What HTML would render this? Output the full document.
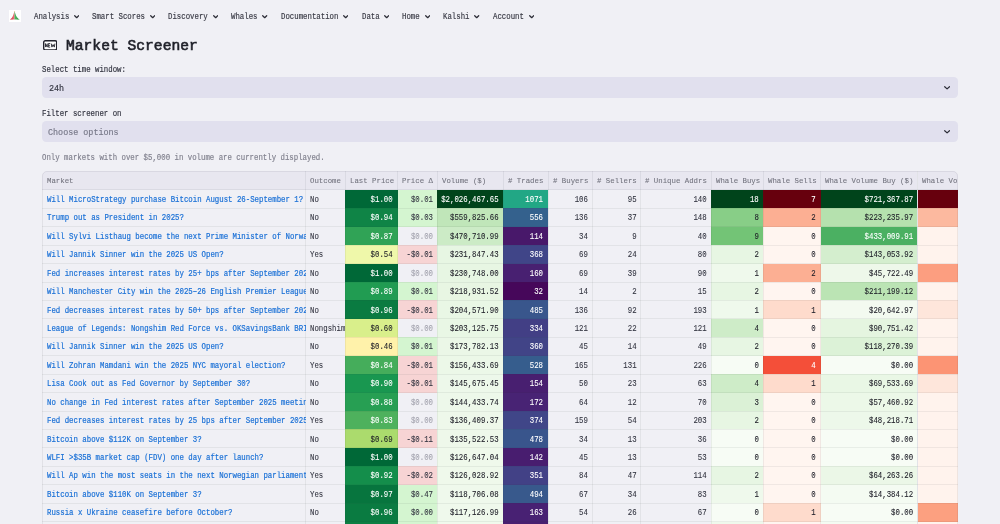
<!DOCTYPE html>
<html><head><meta charset="utf-8"><style>
html,body{margin:0;padding:0;width:1000px;height:524px;overflow:hidden;background:#f0f0f5;}
body{position:relative;font-family:"Liberation Mono",monospace;}
.t{will-change:transform;position:absolute;white-space:pre;line-height:1.1328;-webkit-text-stroke:0.15px currentColor;}
.a{position:absolute;}
.sel{background:#e1e0ee;border-radius:4.2px;}
.tbl{overflow:hidden;border-radius:5px;}
.tclip{overflow:hidden;}
.tbo{position:absolute;border:1px solid rgba(49,51,63,0.08);border-radius:5px;box-sizing:border-box;}
.tbl>div{position:absolute;}
.tbl>.gv{top:0;width:1px;height:400px;background:rgba(49,51,63,0.07);}
.tbl>.gh{left:0;height:1px;width:916px;background:rgba(49,51,63,0.07);}
.h{background:#e8e7f0;}
.ct{will-change:transform;position:absolute;white-space:pre;overflow:hidden;font-size:7.37px;line-height:1.1328;-webkit-text-stroke:0.08px currentColor;}
.lk{-webkit-text-stroke:0.18px currentColor;}
</style></head><body>
<div class="t" style="left:33.60px;top:13px;font-size:7.37px;color:#383944;font-weight:400;transform:scaleY(1.12);transform-origin:0 6px;">Analysis</div>
<svg class="a" style="left:73.58px;top:15.4px" width="5.4" height="3.6" viewBox="0 0 5.4 3.6"><path d="M0.7 0.7 L2.7 2.7 L4.7 0.7" fill="none" stroke="#2b2c36" stroke-width="1.25" stroke-linecap="round" stroke-linejoin="round"/></svg>
<div class="t" style="left:92.13px;top:13px;font-size:7.37px;color:#383944;font-weight:400;transform:scaleY(1.12);transform-origin:0 6px;">Smart Scores</div>
<svg class="a" style="left:149.79px;top:15.4px" width="5.4" height="3.6" viewBox="0 0 5.4 3.6"><path d="M0.7 0.7 L2.7 2.7 L4.7 0.7" fill="none" stroke="#2b2c36" stroke-width="1.25" stroke-linecap="round" stroke-linejoin="round"/></svg>
<div class="t" style="left:168.34px;top:13px;font-size:7.37px;color:#383944;font-weight:400;transform:scaleY(1.12);transform-origin:0 6px;">Discovery</div>
<svg class="a" style="left:212.74px;top:15.4px" width="5.4" height="3.6" viewBox="0 0 5.4 3.6"><path d="M0.7 0.7 L2.7 2.7 L4.7 0.7" fill="none" stroke="#2b2c36" stroke-width="1.25" stroke-linecap="round" stroke-linejoin="round"/></svg>
<div class="t" style="left:231.29px;top:13px;font-size:7.37px;color:#383944;font-weight:400;transform:scaleY(1.12);transform-origin:0 6px;">Whales</div>
<svg class="a" style="left:262.42px;top:15.4px" width="5.4" height="3.6" viewBox="0 0 5.4 3.6"><path d="M0.7 0.7 L2.7 2.7 L4.7 0.7" fill="none" stroke="#2b2c36" stroke-width="1.25" stroke-linecap="round" stroke-linejoin="round"/></svg>
<div class="t" style="left:280.97px;top:13px;font-size:7.37px;color:#383944;font-weight:400;transform:scaleY(1.12);transform-origin:0 6px;">Documentation</div>
<svg class="a" style="left:343.06px;top:15.4px" width="5.4" height="3.6" viewBox="0 0 5.4 3.6"><path d="M0.7 0.7 L2.7 2.7 L4.7 0.7" fill="none" stroke="#2b2c36" stroke-width="1.25" stroke-linecap="round" stroke-linejoin="round"/></svg>
<div class="t" style="left:361.61px;top:13px;font-size:7.37px;color:#383944;font-weight:400;transform:scaleY(1.12);transform-origin:0 6px;">Data</div>
<svg class="a" style="left:383.89px;top:15.4px" width="5.4" height="3.6" viewBox="0 0 5.4 3.6"><path d="M0.7 0.7 L2.7 2.7 L4.7 0.7" fill="none" stroke="#2b2c36" stroke-width="1.25" stroke-linecap="round" stroke-linejoin="round"/></svg>
<div class="t" style="left:402.44px;top:13px;font-size:7.37px;color:#383944;font-weight:400;transform:scaleY(1.12);transform-origin:0 6px;">Home</div>
<svg class="a" style="left:424.73px;top:15.4px" width="5.4" height="3.6" viewBox="0 0 5.4 3.6"><path d="M0.7 0.7 L2.7 2.7 L4.7 0.7" fill="none" stroke="#2b2c36" stroke-width="1.25" stroke-linecap="round" stroke-linejoin="round"/></svg>
<div class="t" style="left:443.28px;top:13px;font-size:7.37px;color:#383944;font-weight:400;transform:scaleY(1.12);transform-origin:0 6px;">Kalshi</div>
<svg class="a" style="left:474.41px;top:15.4px" width="5.4" height="3.6" viewBox="0 0 5.4 3.6"><path d="M0.7 0.7 L2.7 2.7 L4.7 0.7" fill="none" stroke="#2b2c36" stroke-width="1.25" stroke-linecap="round" stroke-linejoin="round"/></svg>
<div class="t" style="left:492.96px;top:13px;font-size:7.37px;color:#383944;font-weight:400;transform:scaleY(1.12);transform-origin:0 6px;">Account</div>
<svg class="a" style="left:528.52px;top:15.4px" width="5.4" height="3.6" viewBox="0 0 5.4 3.6"><path d="M0.7 0.7 L2.7 2.7 L4.7 0.7" fill="none" stroke="#2b2c36" stroke-width="1.25" stroke-linecap="round" stroke-linejoin="round"/></svg>
<svg class="a" style="left:9px;top:10px" width="12" height="12" viewBox="0 0 12 12"><rect width="12" height="12" fill="#ffffff"/><path d="M0.9 9.4 C3.0 9.2 4.2 5.8 5.5 1.1 L5.5 9.4 Z" fill="#ef6270"/><path d="M5.5 1.1 C6.9 5.8 8.4 9.2 10.8 9.4 L5.5 9.4 Z" fill="#49b45c"/><path d="M0.9 9.4 C2.2 9.2 3.0 8.2 3.7 6.8 L3.7 9.4 Z" fill="#b8444f" opacity="0.55"/><path d="M10.8 9.4 C9.5 9.2 8.6 8.2 7.8 6.9 L7.8 9.4 Z" fill="#2b7f3e" opacity="0.45"/><path d="M4.9 0.9 L6.1 0.9 L5.5 2.0 Z" fill="#f0c040" opacity="0.5"/></svg>
<svg class="a" style="left:42.6px;top:39.6px" width="14.4" height="10.6" viewBox="0 0 14.4 10.6"><rect x="0.7" y="0.7" width="13" height="9.2" rx="1.5" fill="#ffffff" stroke="#23232d" stroke-width="1.4"/><path d="M2.5 7.1 V3.6 L4.2 7.1 V3.6 M7.2 3.6 H5.3 V7.1 H7.2 M5.3 5.35 H6.9 M8.3 3.6 L8.9 7.1 L10.1 4.6 L11.3 7.1 L11.9 3.6" fill="none" stroke="#2a2a34" stroke-width="0.95" stroke-linejoin="round"/></svg>
<div class="t" style="left:66.00px;top:38px;font-size:14.65px;color:#1f2029;font-weight:400;-webkit-text-stroke:0.6px #1f2029;">Market Screener</div>
<div class="t" style="left:42.40px;top:66px;font-size:7.37px;color:#31333f;font-weight:400;transform:scaleY(1.12);transform-origin:0 6px;">Select time window:</div>
<div class="a sel" style="left:42.3px;top:77px;width:915.7px;height:20.9px"></div>
<div class="t" style="left:48.80px;top:85px;font-size:8.42px;color:#31333f;font-weight:400;transform:scaleY(1.05);transform-origin:0 6px;">24h</div>
<svg class="a" style="left:944.3px;top:85.6px" width="6.2" height="4" viewBox="0 0 6.2 4"><path d="M0.7 0.7 L3.1 2.9 L5.5 0.7" fill="none" stroke="#2b2c36" stroke-width="1.2" stroke-linecap="round" stroke-linejoin="round"/></svg>
<div class="t" style="left:42.40px;top:110px;font-size:7.37px;color:#31333f;font-weight:400;transform:scaleY(1.12);transform-origin:0 6px;">Filter screener on</div>
<div class="a sel" style="left:42.3px;top:121.3px;width:915.7px;height:20.9px"></div>
<div class="t" style="left:47.80px;top:129px;font-size:8.42px;color:#777888;font-weight:400;transform:scaleY(1.05);transform-origin:0 6px;">Choose options</div>
<svg class="a" style="left:944.3px;top:130.3px" width="6.2" height="4" viewBox="0 0 6.2 4"><path d="M0.7 0.7 L3.1 2.9 L5.5 0.7" fill="none" stroke="#2b2c36" stroke-width="1.2" stroke-linecap="round" stroke-linejoin="round"/></svg>
<div class="t" style="left:42.40px;top:154px;font-size:7.37px;color:#80818e;font-weight:400;transform:scaleY(1.12);transform-origin:0 6px;">Only markets with over $5,000 in volume are currently displayed.</div>
<div class="a tbl" style="left:42px;top:171px;width:916px;height:360px">
<div class="h" style="left:0.30px;top:0.10px;width:263.40px;height:18.80px;"></div>
<div class="h" style="left:263.70px;top:0.10px;width:39.60px;height:18.80px;"></div>
<div class="h" style="left:303.30px;top:0.10px;width:52.30px;height:18.80px;"></div>
<div class="h" style="left:355.60px;top:0.10px;width:39.60px;height:18.80px;"></div>
<div class="h" style="left:395.20px;top:0.10px;width:66.20px;height:18.80px;"></div>
<div class="h" style="left:461.40px;top:0.10px;width:44.60px;height:18.80px;"></div>
<div class="h" style="left:506.00px;top:0.10px;width:44.50px;height:18.80px;"></div>
<div class="h" style="left:550.50px;top:0.10px;width:48.20px;height:18.80px;"></div>
<div class="h" style="left:598.70px;top:0.10px;width:70.30px;height:18.80px;"></div>
<div class="h" style="left:669.00px;top:0.10px;width:52.40px;height:18.80px;"></div>
<div class="h" style="left:721.40px;top:0.10px;width:57.30px;height:18.80px;"></div>
<div class="h" style="left:778.70px;top:0.10px;width:96.80px;height:18.80px;"></div>
<div class="h" style="left:875.50px;top:0.10px;width:82.50px;height:18.80px;"></div>
<div class="c" style="left:0.30px;top:18.90px;width:263.40px;height:18.43px;"></div>
<div class="c" style="left:263.70px;top:18.90px;width:39.60px;height:18.43px;"></div>
<div class="c" style="left:303.30px;top:18.90px;width:52.30px;height:18.43px;background:#006837;"></div>
<div class="c" style="left:355.60px;top:18.90px;width:39.60px;height:18.43px;background:#d4f5d0;"></div>
<div class="c" style="left:395.20px;top:18.90px;width:66.20px;height:18.43px;background:#00441b;"></div>
<div class="c" style="left:461.40px;top:18.90px;width:44.60px;height:18.43px;background:#22a785;"></div>
<div class="c" style="left:506.00px;top:18.90px;width:44.50px;height:18.43px;"></div>
<div class="c" style="left:550.50px;top:18.90px;width:48.20px;height:18.43px;"></div>
<div class="c" style="left:598.70px;top:18.90px;width:70.30px;height:18.43px;"></div>
<div class="c" style="left:669.00px;top:18.90px;width:52.40px;height:18.43px;background:#00441b;"></div>
<div class="c" style="left:721.40px;top:18.90px;width:57.30px;height:18.43px;background:#67000d;"></div>
<div class="c" style="left:778.70px;top:18.90px;width:96.80px;height:18.43px;background:#00441b;"></div>
<div class="c" style="left:875.50px;top:18.90px;width:82.50px;height:18.43px;background:#67000d;"></div>
<div class="c" style="left:0.30px;top:37.33px;width:263.40px;height:18.43px;"></div>
<div class="c" style="left:263.70px;top:37.33px;width:39.60px;height:18.43px;"></div>
<div class="c" style="left:303.30px;top:37.33px;width:52.30px;height:18.43px;background:#0f8446;"></div>
<div class="c" style="left:355.60px;top:37.33px;width:39.60px;height:18.43px;background:#d4f5d0;"></div>
<div class="c" style="left:395.20px;top:37.33px;width:66.20px;height:18.43px;background:#c0e6b9;"></div>
<div class="c" style="left:461.40px;top:37.33px;width:44.60px;height:18.43px;background:#34618d;"></div>
<div class="c" style="left:506.00px;top:37.33px;width:44.50px;height:18.43px;"></div>
<div class="c" style="left:550.50px;top:37.33px;width:48.20px;height:18.43px;"></div>
<div class="c" style="left:598.70px;top:37.33px;width:70.30px;height:18.43px;"></div>
<div class="c" style="left:669.00px;top:37.33px;width:52.40px;height:18.43px;background:#88ce87;"></div>
<div class="c" style="left:721.40px;top:37.33px;width:57.30px;height:18.43px;background:#fcaf93;"></div>
<div class="c" style="left:778.70px;top:37.33px;width:96.80px;height:18.43px;background:#b5e1ae;"></div>
<div class="c" style="left:875.50px;top:37.33px;width:82.50px;height:18.43px;background:#fcb99f;"></div>
<div class="c" style="left:0.30px;top:55.76px;width:263.40px;height:18.43px;"></div>
<div class="c" style="left:263.70px;top:55.76px;width:39.60px;height:18.43px;"></div>
<div class="c" style="left:303.30px;top:55.76px;width:52.30px;height:18.43px;background:#30a356;"></div>
<div class="c" style="left:355.60px;top:55.76px;width:39.60px;height:18.43px;"></div>
<div class="c" style="left:395.20px;top:55.76px;width:66.20px;height:18.43px;background:#ccebc6;"></div>
<div class="c" style="left:461.40px;top:55.76px;width:44.60px;height:18.43px;background:#48186a;"></div>
<div class="c" style="left:506.00px;top:55.76px;width:44.50px;height:18.43px;"></div>
<div class="c" style="left:550.50px;top:55.76px;width:48.20px;height:18.43px;"></div>
<div class="c" style="left:598.70px;top:55.76px;width:70.30px;height:18.43px;"></div>
<div class="c" style="left:669.00px;top:55.76px;width:52.40px;height:18.43px;background:#73c476;"></div>
<div class="c" style="left:721.40px;top:55.76px;width:57.30px;height:18.43px;background:#fff5f0;"></div>
<div class="c" style="left:778.70px;top:55.76px;width:96.80px;height:18.43px;background:#4bb062;"></div>
<div class="c" style="left:875.50px;top:55.76px;width:82.50px;height:18.43px;background:#fff3ed;"></div>
<div class="c" style="left:0.30px;top:74.19px;width:263.40px;height:18.43px;"></div>
<div class="c" style="left:263.70px;top:74.19px;width:39.60px;height:18.43px;"></div>
<div class="c" style="left:303.30px;top:74.19px;width:52.30px;height:18.43px;background:#eff8aa;"></div>
<div class="c" style="left:355.60px;top:74.19px;width:39.60px;height:18.43px;background:#f7d4d4;"></div>
<div class="c" style="left:395.20px;top:74.19px;width:66.20px;height:18.43px;background:#e7f6e3;"></div>
<div class="c" style="left:461.40px;top:74.19px;width:44.60px;height:18.43px;background:#404588;"></div>
<div class="c" style="left:506.00px;top:74.19px;width:44.50px;height:18.43px;"></div>
<div class="c" style="left:550.50px;top:74.19px;width:48.20px;height:18.43px;"></div>
<div class="c" style="left:598.70px;top:74.19px;width:70.30px;height:18.43px;"></div>
<div class="c" style="left:669.00px;top:74.19px;width:52.40px;height:18.43px;background:#e7f6e3;"></div>
<div class="c" style="left:721.40px;top:74.19px;width:57.30px;height:18.43px;background:#fff5f0;"></div>
<div class="c" style="left:778.70px;top:74.19px;width:96.80px;height:18.43px;background:#d4eece;"></div>
<div class="c" style="left:875.50px;top:74.19px;width:82.50px;height:18.43px;background:#fff3ed;"></div>
<div class="c" style="left:0.30px;top:92.62px;width:263.40px;height:18.43px;"></div>
<div class="c" style="left:263.70px;top:92.62px;width:39.60px;height:18.43px;"></div>
<div class="c" style="left:303.30px;top:92.62px;width:52.30px;height:18.43px;background:#006837;"></div>
<div class="c" style="left:355.60px;top:92.62px;width:39.60px;height:18.43px;"></div>
<div class="c" style="left:395.20px;top:92.62px;width:66.20px;height:18.43px;background:#e7f6e3;"></div>
<div class="c" style="left:461.40px;top:92.62px;width:44.60px;height:18.43px;background:#482071;"></div>
<div class="c" style="left:506.00px;top:92.62px;width:44.50px;height:18.43px;"></div>
<div class="c" style="left:550.50px;top:92.62px;width:48.20px;height:18.43px;"></div>
<div class="c" style="left:598.70px;top:92.62px;width:70.30px;height:18.43px;"></div>
<div class="c" style="left:669.00px;top:92.62px;width:52.40px;height:18.43px;background:#eff9ec;"></div>
<div class="c" style="left:721.40px;top:92.62px;width:57.30px;height:18.43px;background:#fcaf93;"></div>
<div class="c" style="left:778.70px;top:92.62px;width:96.80px;height:18.43px;background:#eef8ea;"></div>
<div class="c" style="left:875.50px;top:92.62px;width:82.50px;height:18.43px;background:#fc9e80;"></div>
<div class="c" style="left:0.30px;top:111.05px;width:263.40px;height:18.43px;"></div>
<div class="c" style="left:263.70px;top:111.05px;width:39.60px;height:18.43px;"></div>
<div class="c" style="left:303.30px;top:111.05px;width:52.30px;height:18.43px;background:#219c52;"></div>
<div class="c" style="left:355.60px;top:111.05px;width:39.60px;height:18.43px;background:#d4f5d0;"></div>
<div class="c" style="left:395.20px;top:111.05px;width:66.20px;height:18.43px;background:#e8f6e3;"></div>
<div class="c" style="left:461.40px;top:111.05px;width:44.60px;height:18.43px;background:#46075a;"></div>
<div class="c" style="left:506.00px;top:111.05px;width:44.50px;height:18.43px;"></div>
<div class="c" style="left:550.50px;top:111.05px;width:48.20px;height:18.43px;"></div>
<div class="c" style="left:598.70px;top:111.05px;width:70.30px;height:18.43px;"></div>
<div class="c" style="left:669.00px;top:111.05px;width:52.40px;height:18.43px;background:#e7f6e3;"></div>
<div class="c" style="left:721.40px;top:111.05px;width:57.30px;height:18.43px;background:#fff5f0;"></div>
<div class="c" style="left:778.70px;top:111.05px;width:96.80px;height:18.43px;background:#bbe4b4;"></div>
<div class="c" style="left:875.50px;top:111.05px;width:82.50px;height:18.43px;background:#fff3ed;"></div>
<div class="c" style="left:0.30px;top:129.48px;width:263.40px;height:18.43px;"></div>
<div class="c" style="left:263.70px;top:129.48px;width:39.60px;height:18.43px;"></div>
<div class="c" style="left:303.30px;top:129.48px;width:52.30px;height:18.43px;background:#0a7b41;"></div>
<div class="c" style="left:355.60px;top:129.48px;width:39.60px;height:18.43px;background:#f7d4d4;"></div>
<div class="c" style="left:395.20px;top:129.48px;width:66.20px;height:18.43px;background:#e9f7e5;"></div>
<div class="c" style="left:461.40px;top:129.48px;width:44.60px;height:18.43px;background:#39568c;"></div>
<div class="c" style="left:506.00px;top:129.48px;width:44.50px;height:18.43px;"></div>
<div class="c" style="left:550.50px;top:129.48px;width:48.20px;height:18.43px;"></div>
<div class="c" style="left:598.70px;top:129.48px;width:70.30px;height:18.43px;"></div>
<div class="c" style="left:669.00px;top:129.48px;width:52.40px;height:18.43px;background:#eff9ec;"></div>
<div class="c" style="left:721.40px;top:129.48px;width:57.30px;height:18.43px;background:#fedbcc;"></div>
<div class="c" style="left:778.70px;top:129.48px;width:96.80px;height:18.43px;background:#f3faf0;"></div>
<div class="c" style="left:875.50px;top:129.48px;width:82.50px;height:18.43px;background:#fee6db;"></div>
<div class="c" style="left:0.30px;top:147.91px;width:263.40px;height:18.43px;"></div>
<div class="c" style="left:263.70px;top:147.91px;width:39.60px;height:18.43px;"></div>
<div class="c" style="left:303.30px;top:147.91px;width:52.30px;height:18.43px;background:#d9ef8b;"></div>
<div class="c" style="left:355.60px;top:147.91px;width:39.60px;height:18.43px;"></div>
<div class="c" style="left:395.20px;top:147.91px;width:66.20px;height:18.43px;background:#e9f7e5;"></div>
<div class="c" style="left:461.40px;top:147.91px;width:44.60px;height:18.43px;background:#423f85;"></div>
<div class="c" style="left:506.00px;top:147.91px;width:44.50px;height:18.43px;"></div>
<div class="c" style="left:550.50px;top:147.91px;width:48.20px;height:18.43px;"></div>
<div class="c" style="left:598.70px;top:147.91px;width:70.30px;height:18.43px;"></div>
<div class="c" style="left:669.00px;top:147.91px;width:52.40px;height:18.43px;background:#ceecc8;"></div>
<div class="c" style="left:721.40px;top:147.91px;width:57.30px;height:18.43px;background:#fff5f0;"></div>
<div class="c" style="left:778.70px;top:147.91px;width:96.80px;height:18.43px;background:#e5f5e0;"></div>
<div class="c" style="left:875.50px;top:147.91px;width:82.50px;height:18.43px;background:#fff3ed;"></div>
<div class="c" style="left:0.30px;top:166.34px;width:263.40px;height:18.43px;"></div>
<div class="c" style="left:263.70px;top:166.34px;width:39.60px;height:18.43px;"></div>
<div class="c" style="left:303.30px;top:166.34px;width:52.30px;height:18.43px;background:#fff2aa;"></div>
<div class="c" style="left:355.60px;top:166.34px;width:39.60px;height:18.43px;background:#d4f5d0;"></div>
<div class="c" style="left:395.20px;top:166.34px;width:66.20px;height:18.43px;background:#ebf7e7;"></div>
<div class="c" style="left:461.40px;top:166.34px;width:44.60px;height:18.43px;background:#414487;"></div>
<div class="c" style="left:506.00px;top:166.34px;width:44.50px;height:18.43px;"></div>
<div class="c" style="left:550.50px;top:166.34px;width:48.20px;height:18.43px;"></div>
<div class="c" style="left:598.70px;top:166.34px;width:70.30px;height:18.43px;"></div>
<div class="c" style="left:669.00px;top:166.34px;width:52.40px;height:18.43px;background:#e7f6e3;"></div>
<div class="c" style="left:721.40px;top:166.34px;width:57.30px;height:18.43px;background:#fff5f0;"></div>
<div class="c" style="left:778.70px;top:166.34px;width:96.80px;height:18.43px;background:#dcf2d7;"></div>
<div class="c" style="left:875.50px;top:166.34px;width:82.50px;height:18.43px;background:#fff3ed;"></div>
<div class="c" style="left:0.30px;top:184.77px;width:263.40px;height:18.43px;"></div>
<div class="c" style="left:263.70px;top:184.77px;width:39.60px;height:18.43px;"></div>
<div class="c" style="left:303.30px;top:184.77px;width:52.30px;height:18.43px;background:#45ad5b;"></div>
<div class="c" style="left:355.60px;top:184.77px;width:39.60px;height:18.43px;background:#f7d4d4;"></div>
<div class="c" style="left:395.20px;top:184.77px;width:66.20px;height:18.43px;background:#ecf8e8;"></div>
<div class="c" style="left:461.40px;top:184.77px;width:44.60px;height:18.43px;background:#365d8d;"></div>
<div class="c" style="left:506.00px;top:184.77px;width:44.50px;height:18.43px;"></div>
<div class="c" style="left:550.50px;top:184.77px;width:48.20px;height:18.43px;"></div>
<div class="c" style="left:598.70px;top:184.77px;width:70.30px;height:18.43px;"></div>
<div class="c" style="left:669.00px;top:184.77px;width:52.40px;height:18.43px;background:#f7fcf5;"></div>
<div class="c" style="left:721.40px;top:184.77px;width:57.30px;height:18.43px;background:#f44f39;"></div>
<div class="c" style="left:778.70px;top:184.77px;width:96.80px;height:18.43px;background:#f7fcf5;"></div>
<div class="c" style="left:875.50px;top:184.77px;width:82.50px;height:18.43px;background:#fc9474;"></div>
<div class="c" style="left:0.30px;top:203.20px;width:263.40px;height:18.43px;"></div>
<div class="c" style="left:263.70px;top:203.20px;width:39.60px;height:18.43px;"></div>
<div class="c" style="left:303.30px;top:203.20px;width:52.30px;height:18.43px;background:#199750;"></div>
<div class="c" style="left:355.60px;top:203.20px;width:39.60px;height:18.43px;background:#f7d4d4;"></div>
<div class="c" style="left:395.20px;top:203.20px;width:66.20px;height:18.43px;background:#edf8ea;"></div>
<div class="c" style="left:461.40px;top:203.20px;width:44.60px;height:18.43px;background:#481f70;"></div>
<div class="c" style="left:506.00px;top:203.20px;width:44.50px;height:18.43px;"></div>
<div class="c" style="left:550.50px;top:203.20px;width:48.20px;height:18.43px;"></div>
<div class="c" style="left:598.70px;top:203.20px;width:70.30px;height:18.43px;"></div>
<div class="c" style="left:669.00px;top:203.20px;width:52.40px;height:18.43px;background:#ceecc8;"></div>
<div class="c" style="left:721.40px;top:203.20px;width:57.30px;height:18.43px;background:#fedbcc;"></div>
<div class="c" style="left:778.70px;top:203.20px;width:96.80px;height:18.43px;background:#e9f7e5;"></div>
<div class="c" style="left:875.50px;top:203.20px;width:82.50px;height:18.43px;background:#fee6db;"></div>
<div class="c" style="left:0.30px;top:221.63px;width:263.40px;height:18.43px;"></div>
<div class="c" style="left:263.70px;top:221.63px;width:39.60px;height:18.43px;"></div>
<div class="c" style="left:303.30px;top:221.63px;width:52.30px;height:18.43px;background:#279f53;"></div>
<div class="c" style="left:355.60px;top:221.63px;width:39.60px;height:18.43px;"></div>
<div class="c" style="left:395.20px;top:221.63px;width:66.20px;height:18.43px;background:#edf8ea;"></div>
<div class="c" style="left:461.40px;top:221.63px;width:44.60px;height:18.43px;background:#482374;"></div>
<div class="c" style="left:506.00px;top:221.63px;width:44.50px;height:18.43px;"></div>
<div class="c" style="left:550.50px;top:221.63px;width:48.20px;height:18.43px;"></div>
<div class="c" style="left:598.70px;top:221.63px;width:70.30px;height:18.43px;"></div>
<div class="c" style="left:669.00px;top:221.63px;width:52.40px;height:18.43px;background:#dbf1d6;"></div>
<div class="c" style="left:721.40px;top:221.63px;width:57.30px;height:18.43px;background:#fff5f0;"></div>
<div class="c" style="left:778.70px;top:221.63px;width:96.80px;height:18.43px;background:#ecf8e8;"></div>
<div class="c" style="left:875.50px;top:221.63px;width:82.50px;height:18.43px;background:#fff3ed;"></div>
<div class="c" style="left:0.30px;top:240.06px;width:263.40px;height:18.43px;"></div>
<div class="c" style="left:263.70px;top:240.06px;width:39.60px;height:18.43px;"></div>
<div class="c" style="left:303.30px;top:240.06px;width:52.30px;height:18.43px;background:#4eb15d;"></div>
<div class="c" style="left:355.60px;top:240.06px;width:39.60px;height:18.43px;"></div>
<div class="c" style="left:395.20px;top:240.06px;width:66.20px;height:18.43px;background:#eef8ea;"></div>
<div class="c" style="left:461.40px;top:240.06px;width:44.60px;height:18.43px;background:#404688;"></div>
<div class="c" style="left:506.00px;top:240.06px;width:44.50px;height:18.43px;"></div>
<div class="c" style="left:550.50px;top:240.06px;width:48.20px;height:18.43px;"></div>
<div class="c" style="left:598.70px;top:240.06px;width:70.30px;height:18.43px;"></div>
<div class="c" style="left:669.00px;top:240.06px;width:52.40px;height:18.43px;background:#e7f6e3;"></div>
<div class="c" style="left:721.40px;top:240.06px;width:57.30px;height:18.43px;background:#fff5f0;"></div>
<div class="c" style="left:778.70px;top:240.06px;width:96.80px;height:18.43px;background:#edf8ea;"></div>
<div class="c" style="left:875.50px;top:240.06px;width:82.50px;height:18.43px;background:#fff3ed;"></div>
<div class="c" style="left:0.30px;top:258.49px;width:263.40px;height:18.43px;"></div>
<div class="c" style="left:263.70px;top:258.49px;width:39.60px;height:18.43px;"></div>
<div class="c" style="left:303.30px;top:258.49px;width:52.30px;height:18.43px;background:#abdb6d;"></div>
<div class="c" style="left:355.60px;top:258.49px;width:39.60px;height:18.43px;background:#f7d4d4;"></div>
<div class="c" style="left:395.20px;top:258.49px;width:66.20px;height:18.43px;background:#eef8ea;"></div>
<div class="c" style="left:461.40px;top:258.49px;width:44.60px;height:18.43px;background:#39558c;"></div>
<div class="c" style="left:506.00px;top:258.49px;width:44.50px;height:18.43px;"></div>
<div class="c" style="left:550.50px;top:258.49px;width:48.20px;height:18.43px;"></div>
<div class="c" style="left:598.70px;top:258.49px;width:70.30px;height:18.43px;"></div>
<div class="c" style="left:669.00px;top:258.49px;width:52.40px;height:18.43px;background:#f7fcf5;"></div>
<div class="c" style="left:721.40px;top:258.49px;width:57.30px;height:18.43px;background:#fff5f0;"></div>
<div class="c" style="left:778.70px;top:258.49px;width:96.80px;height:18.43px;background:#f7fcf5;"></div>
<div class="c" style="left:875.50px;top:258.49px;width:82.50px;height:18.43px;background:#fff3ed;"></div>
<div class="c" style="left:0.30px;top:276.92px;width:263.40px;height:18.43px;"></div>
<div class="c" style="left:263.70px;top:276.92px;width:39.60px;height:18.43px;"></div>
<div class="c" style="left:303.30px;top:276.92px;width:52.30px;height:18.43px;background:#006837;"></div>
<div class="c" style="left:355.60px;top:276.92px;width:39.60px;height:18.43px;"></div>
<div class="c" style="left:395.20px;top:276.92px;width:66.20px;height:18.43px;background:#eff9eb;"></div>
<div class="c" style="left:461.40px;top:276.92px;width:44.60px;height:18.43px;background:#481d6f;"></div>
<div class="c" style="left:506.00px;top:276.92px;width:44.50px;height:18.43px;"></div>
<div class="c" style="left:550.50px;top:276.92px;width:48.20px;height:18.43px;"></div>
<div class="c" style="left:598.70px;top:276.92px;width:70.30px;height:18.43px;"></div>
<div class="c" style="left:669.00px;top:276.92px;width:52.40px;height:18.43px;background:#f7fcf5;"></div>
<div class="c" style="left:721.40px;top:276.92px;width:57.30px;height:18.43px;background:#fff5f0;"></div>
<div class="c" style="left:778.70px;top:276.92px;width:96.80px;height:18.43px;background:#f7fcf5;"></div>
<div class="c" style="left:875.50px;top:276.92px;width:82.50px;height:18.43px;background:#fff3ed;"></div>
<div class="c" style="left:0.30px;top:295.35px;width:263.40px;height:18.43px;"></div>
<div class="c" style="left:263.70px;top:295.35px;width:39.60px;height:18.43px;"></div>
<div class="c" style="left:303.30px;top:295.35px;width:52.30px;height:18.43px;background:#148e4b;"></div>
<div class="c" style="left:355.60px;top:295.35px;width:39.60px;height:18.43px;background:#f7d4d4;"></div>
<div class="c" style="left:395.20px;top:295.35px;width:66.20px;height:18.43px;background:#eff9eb;"></div>
<div class="c" style="left:461.40px;top:295.35px;width:44.60px;height:18.43px;background:#424186;"></div>
<div class="c" style="left:506.00px;top:295.35px;width:44.50px;height:18.43px;"></div>
<div class="c" style="left:550.50px;top:295.35px;width:48.20px;height:18.43px;"></div>
<div class="c" style="left:598.70px;top:295.35px;width:70.30px;height:18.43px;"></div>
<div class="c" style="left:669.00px;top:295.35px;width:52.40px;height:18.43px;background:#e7f6e3;"></div>
<div class="c" style="left:721.40px;top:295.35px;width:57.30px;height:18.43px;background:#fff5f0;"></div>
<div class="c" style="left:778.70px;top:295.35px;width:96.80px;height:18.43px;background:#ebf7e7;"></div>
<div class="c" style="left:875.50px;top:295.35px;width:82.50px;height:18.43px;background:#fff3ed;"></div>
<div class="c" style="left:0.30px;top:313.78px;width:263.40px;height:18.43px;"></div>
<div class="c" style="left:263.70px;top:313.78px;width:39.60px;height:18.43px;"></div>
<div class="c" style="left:303.30px;top:313.78px;width:52.30px;height:18.43px;background:#07753e;"></div>
<div class="c" style="left:355.60px;top:313.78px;width:39.60px;height:18.43px;background:#d4f5d0;"></div>
<div class="c" style="left:395.20px;top:313.78px;width:66.20px;height:18.43px;background:#eff9ec;"></div>
<div class="c" style="left:461.40px;top:313.78px;width:44.60px;height:18.43px;background:#38598c;"></div>
<div class="c" style="left:506.00px;top:313.78px;width:44.50px;height:18.43px;"></div>
<div class="c" style="left:550.50px;top:313.78px;width:48.20px;height:18.43px;"></div>
<div class="c" style="left:598.70px;top:313.78px;width:70.30px;height:18.43px;"></div>
<div class="c" style="left:669.00px;top:313.78px;width:52.40px;height:18.43px;background:#eff9ec;"></div>
<div class="c" style="left:721.40px;top:313.78px;width:57.30px;height:18.43px;background:#fff5f0;"></div>
<div class="c" style="left:778.70px;top:313.78px;width:96.80px;height:18.43px;background:#f4fbf2;"></div>
<div class="c" style="left:875.50px;top:313.78px;width:82.50px;height:18.43px;background:#fff3ed;"></div>
<div class="c" style="left:0.30px;top:332.21px;width:263.40px;height:18.43px;"></div>
<div class="c" style="left:263.70px;top:332.21px;width:39.60px;height:18.43px;"></div>
<div class="c" style="left:303.30px;top:332.21px;width:52.30px;height:18.43px;background:#0a7b41;"></div>
<div class="c" style="left:355.60px;top:332.21px;width:39.60px;height:18.43px;background:#d4f5d0;"></div>
<div class="c" style="left:395.20px;top:332.21px;width:66.20px;height:18.43px;background:#eff9ec;"></div>
<div class="c" style="left:461.40px;top:332.21px;width:44.60px;height:18.43px;background:#482173;"></div>
<div class="c" style="left:506.00px;top:332.21px;width:44.50px;height:18.43px;"></div>
<div class="c" style="left:550.50px;top:332.21px;width:48.20px;height:18.43px;"></div>
<div class="c" style="left:598.70px;top:332.21px;width:70.30px;height:18.43px;"></div>
<div class="c" style="left:669.00px;top:332.21px;width:52.40px;height:18.43px;background:#f7fcf5;"></div>
<div class="c" style="left:721.40px;top:332.21px;width:57.30px;height:18.43px;background:#fedbcc;"></div>
<div class="c" style="left:778.70px;top:332.21px;width:96.80px;height:18.43px;background:#f7fcf5;"></div>
<div class="c" style="left:875.50px;top:332.21px;width:82.50px;height:18.43px;background:#fca080;"></div>
<div class="c" style="left:0.30px;top:350.64px;width:263.40px;height:18.43px;"></div>
<div class="c" style="left:263.70px;top:350.64px;width:39.60px;height:18.43px;"></div>
<div class="c" style="left:303.30px;top:350.64px;width:52.30px;height:18.43px;background:#0c7f43;"></div>
<div class="c" style="left:355.60px;top:350.64px;width:39.60px;height:18.43px;background:#d4f5d0;"></div>
<div class="c" style="left:395.20px;top:350.64px;width:66.20px;height:18.43px;background:#f0f9ec;"></div>
<div class="c" style="left:461.40px;top:350.64px;width:44.60px;height:18.43px;background:#481f70;"></div>
<div class="c" style="left:506.00px;top:350.64px;width:44.50px;height:18.43px;"></div>
<div class="c" style="left:550.50px;top:350.64px;width:48.20px;height:18.43px;"></div>
<div class="c" style="left:598.70px;top:350.64px;width:70.30px;height:18.43px;"></div>
<div class="c" style="left:669.00px;top:350.64px;width:52.40px;height:18.43px;background:#eff9ec;"></div>
<div class="c" style="left:721.40px;top:350.64px;width:57.30px;height:18.43px;background:#fff5f0;"></div>
<div class="c" style="left:778.70px;top:350.64px;width:96.80px;height:18.43px;background:#f4fbf2;"></div>
<div class="c" style="left:875.50px;top:350.64px;width:82.50px;height:18.43px;background:#fff3ed;"></div>
<div class="gv" style="left:263px"></div>
<div class="gv" style="left:303px"></div>
<div class="gv" style="left:355px"></div>
<div class="gv" style="left:395px"></div>
<div class="gv" style="left:461px"></div>
<div class="gv" style="left:506px"></div>
<div class="gv" style="left:550px"></div>
<div class="gv" style="left:598px"></div>
<div class="gv" style="left:669px"></div>
<div class="gv" style="left:721px"></div>
<div class="gv" style="left:778px"></div>
<div class="gv" style="left:875px"></div>
<div class="gh" style="top:18px"></div>
<div class="gh" style="top:37px"></div>
<div class="gh" style="top:55px"></div>
<div class="gh" style="top:74px"></div>
<div class="gh" style="top:92px"></div>
<div class="gh" style="top:111px"></div>
<div class="gh" style="top:129px"></div>
<div class="gh" style="top:147px"></div>
<div class="gh" style="top:166px"></div>
<div class="gh" style="top:184px"></div>
<div class="gh" style="top:203px"></div>
<div class="gh" style="top:221px"></div>
<div class="gh" style="top:240px"></div>
<div class="gh" style="top:258px"></div>
<div class="gh" style="top:276px"></div>
<div class="gh" style="top:295px"></div>
<div class="gh" style="top:313px"></div>
<div class="gh" style="top:332px"></div>
<div class="gh" style="top:350px"></div>
<div class="gh" style="top:369px"></div>
</div>
<div class="ct " style="left:46.80px;width:258.90px;top:177px;color:#72737e;">Market</div>
<div class="ct " style="left:310.20px;width:35.10px;top:177px;color:#72737e;">Outcome</div>
<div class="ct " style="left:349.80px;width:47.80px;top:177px;color:#72737e;">Last Price</div>
<div class="ct " style="left:402.10px;width:35.10px;top:177px;color:#72737e;">Price Δ</div>
<div class="ct " style="left:441.70px;width:61.70px;top:177px;color:#72737e;">Volume ($)</div>
<div class="ct " style="left:507.90px;width:40.10px;top:177px;color:#72737e;"># Trades</div>
<div class="ct " style="left:552.50px;width:40.00px;top:177px;color:#72737e;"># Buyers</div>
<div class="ct " style="left:597.00px;width:43.70px;top:177px;color:#72737e;"># Sellers</div>
<div class="ct " style="left:645.20px;width:65.80px;top:177px;color:#72737e;"># Unique Addrs</div>
<div class="ct " style="left:715.50px;width:47.90px;top:177px;color:#72737e;">Whale Buys</div>
<div class="ct " style="left:767.90px;width:52.80px;top:177px;color:#72737e;">Whale Sells</div>
<div class="ct " style="left:825.20px;width:92.30px;top:177px;color:#72737e;">Whale Volume Buy ($)</div>
<div class="ct " style="left:922.00px;width:36.00px;top:177px;color:#72737e;">Whale Volume Sell ($)</div>
<div class="ct lk" style="left:46.80px;width:258.90px;top:196px;color:#1a70d6;transform:scaleY(1.12);transform-origin:0 6px;">Will MicroStrategy purchase Bitcoin August 26-September 1?</div>
<div class="ct " style="left:310.20px;width:35.10px;top:196px;color:#31333f;transform:scaleY(1.12);transform-origin:0 6px;">No</div>
<div class="ct" style="left:345.30px;width:47.70px;top:196px;color:#ffffff;text-align:right;transform:scaleY(1.12);transform-origin:0 6px;">$1.00</div>
<div class="ct" style="left:397.60px;width:35.00px;top:196px;color:#31333f;text-align:right;transform:scaleY(1.12);transform-origin:0 6px;">$0.01</div>
<div class="ct" style="left:437.20px;width:61.60px;top:196px;color:#ffffff;text-align:right;transform:scaleY(1.12);transform-origin:0 6px;">$2,026,467.65</div>
<div class="ct" style="left:503.40px;width:40.00px;top:196px;color:#ffffff;text-align:right;transform:scaleY(1.12);transform-origin:0 6px;">1071</div>
<div class="ct" style="left:548.00px;width:39.90px;top:196px;color:#31333f;text-align:right;transform:scaleY(1.12);transform-origin:0 6px;">106</div>
<div class="ct" style="left:592.50px;width:43.60px;top:196px;color:#31333f;text-align:right;transform:scaleY(1.12);transform-origin:0 6px;">95</div>
<div class="ct" style="left:640.70px;width:65.70px;top:196px;color:#31333f;text-align:right;transform:scaleY(1.12);transform-origin:0 6px;">140</div>
<div class="ct" style="left:711.00px;width:47.80px;top:196px;color:#ffffff;text-align:right;transform:scaleY(1.12);transform-origin:0 6px;">18</div>
<div class="ct" style="left:763.40px;width:52.70px;top:196px;color:#ffffff;text-align:right;transform:scaleY(1.12);transform-origin:0 6px;">7</div>
<div class="ct" style="left:820.70px;width:92.20px;top:196px;color:#ffffff;text-align:right;transform:scaleY(1.12);transform-origin:0 6px;">$721,367.87</div>
<div class="ct lk" style="left:46.80px;width:258.90px;top:214px;color:#1a70d6;transform:scaleY(1.12);transform-origin:0 6px;">Trump out as President in 2025?</div>
<div class="ct " style="left:310.20px;width:35.10px;top:214px;color:#31333f;transform:scaleY(1.12);transform-origin:0 6px;">No</div>
<div class="ct" style="left:345.30px;width:47.70px;top:214px;color:#ffffff;text-align:right;transform:scaleY(1.12);transform-origin:0 6px;">$0.94</div>
<div class="ct" style="left:397.60px;width:35.00px;top:214px;color:#31333f;text-align:right;transform:scaleY(1.12);transform-origin:0 6px;">$0.03</div>
<div class="ct" style="left:437.20px;width:61.60px;top:214px;color:#1c1c26;text-align:right;transform:scaleY(1.12);transform-origin:0 6px;">$559,825.66</div>
<div class="ct" style="left:503.40px;width:40.00px;top:214px;color:#ffffff;text-align:right;transform:scaleY(1.12);transform-origin:0 6px;">556</div>
<div class="ct" style="left:548.00px;width:39.90px;top:214px;color:#31333f;text-align:right;transform:scaleY(1.12);transform-origin:0 6px;">136</div>
<div class="ct" style="left:592.50px;width:43.60px;top:214px;color:#31333f;text-align:right;transform:scaleY(1.12);transform-origin:0 6px;">37</div>
<div class="ct" style="left:640.70px;width:65.70px;top:214px;color:#31333f;text-align:right;transform:scaleY(1.12);transform-origin:0 6px;">148</div>
<div class="ct" style="left:711.00px;width:47.80px;top:214px;color:#1c1c26;text-align:right;transform:scaleY(1.12);transform-origin:0 6px;">8</div>
<div class="ct" style="left:763.40px;width:52.70px;top:214px;color:#1c1c26;text-align:right;transform:scaleY(1.12);transform-origin:0 6px;">2</div>
<div class="ct" style="left:820.70px;width:92.20px;top:214px;color:#1c1c26;text-align:right;transform:scaleY(1.12);transform-origin:0 6px;">$223,235.97</div>
<div class="ct lk" style="left:46.80px;width:258.90px;top:233px;color:#1a70d6;transform:scaleY(1.12);transform-origin:0 6px;">Will Sylvi Listhaug become the next Prime Minister of Norway?</div>
<div class="ct " style="left:310.20px;width:35.10px;top:233px;color:#31333f;transform:scaleY(1.12);transform-origin:0 6px;">No</div>
<div class="ct" style="left:345.30px;width:47.70px;top:233px;color:#ffffff;text-align:right;transform:scaleY(1.12);transform-origin:0 6px;">$0.87</div>
<div class="ct" style="left:397.60px;width:35.00px;top:233px;color:#a3a3ae;text-align:right;transform:scaleY(1.12);transform-origin:0 6px;">$0.00</div>
<div class="ct" style="left:437.20px;width:61.60px;top:233px;color:#1c1c26;text-align:right;transform:scaleY(1.12);transform-origin:0 6px;">$470,710.99</div>
<div class="ct" style="left:503.40px;width:40.00px;top:233px;color:#ffffff;text-align:right;transform:scaleY(1.12);transform-origin:0 6px;">114</div>
<div class="ct" style="left:548.00px;width:39.90px;top:233px;color:#31333f;text-align:right;transform:scaleY(1.12);transform-origin:0 6px;">34</div>
<div class="ct" style="left:592.50px;width:43.60px;top:233px;color:#31333f;text-align:right;transform:scaleY(1.12);transform-origin:0 6px;">9</div>
<div class="ct" style="left:640.70px;width:65.70px;top:233px;color:#31333f;text-align:right;transform:scaleY(1.12);transform-origin:0 6px;">40</div>
<div class="ct" style="left:711.00px;width:47.80px;top:233px;color:#1c1c26;text-align:right;transform:scaleY(1.12);transform-origin:0 6px;">9</div>
<div class="ct" style="left:763.40px;width:52.70px;top:233px;color:#1c1c26;text-align:right;transform:scaleY(1.12);transform-origin:0 6px;">0</div>
<div class="ct" style="left:820.70px;width:92.20px;top:233px;color:#ffffff;text-align:right;transform:scaleY(1.12);transform-origin:0 6px;">$433,009.91</div>
<div class="ct lk" style="left:46.80px;width:258.90px;top:251px;color:#1a70d6;transform:scaleY(1.12);transform-origin:0 6px;">Will Jannik Sinner win the 2025 US Open?</div>
<div class="ct " style="left:310.20px;width:35.10px;top:251px;color:#31333f;transform:scaleY(1.12);transform-origin:0 6px;">Yes</div>
<div class="ct" style="left:345.30px;width:47.70px;top:251px;color:#1c1c26;text-align:right;transform:scaleY(1.12);transform-origin:0 6px;">$0.54</div>
<div class="ct" style="left:397.60px;width:35.00px;top:251px;color:#31333f;text-align:right;transform:scaleY(1.12);transform-origin:0 6px;">-$0.01</div>
<div class="ct" style="left:437.20px;width:61.60px;top:251px;color:#1c1c26;text-align:right;transform:scaleY(1.12);transform-origin:0 6px;">$231,847.43</div>
<div class="ct" style="left:503.40px;width:40.00px;top:251px;color:#ffffff;text-align:right;transform:scaleY(1.12);transform-origin:0 6px;">368</div>
<div class="ct" style="left:548.00px;width:39.90px;top:251px;color:#31333f;text-align:right;transform:scaleY(1.12);transform-origin:0 6px;">69</div>
<div class="ct" style="left:592.50px;width:43.60px;top:251px;color:#31333f;text-align:right;transform:scaleY(1.12);transform-origin:0 6px;">24</div>
<div class="ct" style="left:640.70px;width:65.70px;top:251px;color:#31333f;text-align:right;transform:scaleY(1.12);transform-origin:0 6px;">80</div>
<div class="ct" style="left:711.00px;width:47.80px;top:251px;color:#1c1c26;text-align:right;transform:scaleY(1.12);transform-origin:0 6px;">2</div>
<div class="ct" style="left:763.40px;width:52.70px;top:251px;color:#1c1c26;text-align:right;transform:scaleY(1.12);transform-origin:0 6px;">0</div>
<div class="ct" style="left:820.70px;width:92.20px;top:251px;color:#1c1c26;text-align:right;transform:scaleY(1.12);transform-origin:0 6px;">$143,053.92</div>
<div class="ct lk" style="left:46.80px;width:258.90px;top:270px;color:#1a70d6;transform:scaleY(1.12);transform-origin:0 6px;">Fed increases interest rates by 25+ bps after September 2025 meeting?</div>
<div class="ct " style="left:310.20px;width:35.10px;top:270px;color:#31333f;transform:scaleY(1.12);transform-origin:0 6px;">No</div>
<div class="ct" style="left:345.30px;width:47.70px;top:270px;color:#ffffff;text-align:right;transform:scaleY(1.12);transform-origin:0 6px;">$1.00</div>
<div class="ct" style="left:397.60px;width:35.00px;top:270px;color:#a3a3ae;text-align:right;transform:scaleY(1.12);transform-origin:0 6px;">$0.00</div>
<div class="ct" style="left:437.20px;width:61.60px;top:270px;color:#1c1c26;text-align:right;transform:scaleY(1.12);transform-origin:0 6px;">$230,748.00</div>
<div class="ct" style="left:503.40px;width:40.00px;top:270px;color:#ffffff;text-align:right;transform:scaleY(1.12);transform-origin:0 6px;">160</div>
<div class="ct" style="left:548.00px;width:39.90px;top:270px;color:#31333f;text-align:right;transform:scaleY(1.12);transform-origin:0 6px;">69</div>
<div class="ct" style="left:592.50px;width:43.60px;top:270px;color:#31333f;text-align:right;transform:scaleY(1.12);transform-origin:0 6px;">39</div>
<div class="ct" style="left:640.70px;width:65.70px;top:270px;color:#31333f;text-align:right;transform:scaleY(1.12);transform-origin:0 6px;">90</div>
<div class="ct" style="left:711.00px;width:47.80px;top:270px;color:#1c1c26;text-align:right;transform:scaleY(1.12);transform-origin:0 6px;">1</div>
<div class="ct" style="left:763.40px;width:52.70px;top:270px;color:#1c1c26;text-align:right;transform:scaleY(1.12);transform-origin:0 6px;">2</div>
<div class="ct" style="left:820.70px;width:92.20px;top:270px;color:#1c1c26;text-align:right;transform:scaleY(1.12);transform-origin:0 6px;">$45,722.49</div>
<div class="ct lk" style="left:46.80px;width:258.90px;top:288px;color:#1a70d6;transform:scaleY(1.12);transform-origin:0 6px;">Will Manchester City win the 2025–26 English Premier League?</div>
<div class="ct " style="left:310.20px;width:35.10px;top:288px;color:#31333f;transform:scaleY(1.12);transform-origin:0 6px;">No</div>
<div class="ct" style="left:345.30px;width:47.70px;top:288px;color:#ffffff;text-align:right;transform:scaleY(1.12);transform-origin:0 6px;">$0.89</div>
<div class="ct" style="left:397.60px;width:35.00px;top:288px;color:#31333f;text-align:right;transform:scaleY(1.12);transform-origin:0 6px;">$0.01</div>
<div class="ct" style="left:437.20px;width:61.60px;top:288px;color:#1c1c26;text-align:right;transform:scaleY(1.12);transform-origin:0 6px;">$218,931.52</div>
<div class="ct" style="left:503.40px;width:40.00px;top:288px;color:#ffffff;text-align:right;transform:scaleY(1.12);transform-origin:0 6px;">32</div>
<div class="ct" style="left:548.00px;width:39.90px;top:288px;color:#31333f;text-align:right;transform:scaleY(1.12);transform-origin:0 6px;">14</div>
<div class="ct" style="left:592.50px;width:43.60px;top:288px;color:#31333f;text-align:right;transform:scaleY(1.12);transform-origin:0 6px;">2</div>
<div class="ct" style="left:640.70px;width:65.70px;top:288px;color:#31333f;text-align:right;transform:scaleY(1.12);transform-origin:0 6px;">15</div>
<div class="ct" style="left:711.00px;width:47.80px;top:288px;color:#1c1c26;text-align:right;transform:scaleY(1.12);transform-origin:0 6px;">2</div>
<div class="ct" style="left:763.40px;width:52.70px;top:288px;color:#1c1c26;text-align:right;transform:scaleY(1.12);transform-origin:0 6px;">0</div>
<div class="ct" style="left:820.70px;width:92.20px;top:288px;color:#1c1c26;text-align:right;transform:scaleY(1.12);transform-origin:0 6px;">$211,199.12</div>
<div class="ct lk" style="left:46.80px;width:258.90px;top:307px;color:#1a70d6;transform:scaleY(1.12);transform-origin:0 6px;">Fed decreases interest rates by 50+ bps after September 2025 meeting?</div>
<div class="ct " style="left:310.20px;width:35.10px;top:307px;color:#31333f;transform:scaleY(1.12);transform-origin:0 6px;">No</div>
<div class="ct" style="left:345.30px;width:47.70px;top:307px;color:#ffffff;text-align:right;transform:scaleY(1.12);transform-origin:0 6px;">$0.96</div>
<div class="ct" style="left:397.60px;width:35.00px;top:307px;color:#31333f;text-align:right;transform:scaleY(1.12);transform-origin:0 6px;">-$0.01</div>
<div class="ct" style="left:437.20px;width:61.60px;top:307px;color:#1c1c26;text-align:right;transform:scaleY(1.12);transform-origin:0 6px;">$204,571.90</div>
<div class="ct" style="left:503.40px;width:40.00px;top:307px;color:#ffffff;text-align:right;transform:scaleY(1.12);transform-origin:0 6px;">485</div>
<div class="ct" style="left:548.00px;width:39.90px;top:307px;color:#31333f;text-align:right;transform:scaleY(1.12);transform-origin:0 6px;">136</div>
<div class="ct" style="left:592.50px;width:43.60px;top:307px;color:#31333f;text-align:right;transform:scaleY(1.12);transform-origin:0 6px;">92</div>
<div class="ct" style="left:640.70px;width:65.70px;top:307px;color:#31333f;text-align:right;transform:scaleY(1.12);transform-origin:0 6px;">193</div>
<div class="ct" style="left:711.00px;width:47.80px;top:307px;color:#1c1c26;text-align:right;transform:scaleY(1.12);transform-origin:0 6px;">1</div>
<div class="ct" style="left:763.40px;width:52.70px;top:307px;color:#1c1c26;text-align:right;transform:scaleY(1.12);transform-origin:0 6px;">1</div>
<div class="ct" style="left:820.70px;width:92.20px;top:307px;color:#1c1c26;text-align:right;transform:scaleY(1.12);transform-origin:0 6px;">$20,642.97</div>
<div class="ct lk" style="left:46.80px;width:258.90px;top:325px;color:#1a70d6;transform:scaleY(1.12);transform-origin:0 6px;">League of Legends: Nongshim Red Force vs. OKSavingsBank BRION</div>
<div class="ct " style="left:310.20px;width:35.10px;top:325px;color:#31333f;transform:scaleY(1.12);transform-origin:0 6px;">Nongshim Red Force</div>
<div class="ct" style="left:345.30px;width:47.70px;top:325px;color:#1c1c26;text-align:right;transform:scaleY(1.12);transform-origin:0 6px;">$0.60</div>
<div class="ct" style="left:397.60px;width:35.00px;top:325px;color:#a3a3ae;text-align:right;transform:scaleY(1.12);transform-origin:0 6px;">$0.00</div>
<div class="ct" style="left:437.20px;width:61.60px;top:325px;color:#1c1c26;text-align:right;transform:scaleY(1.12);transform-origin:0 6px;">$203,125.75</div>
<div class="ct" style="left:503.40px;width:40.00px;top:325px;color:#ffffff;text-align:right;transform:scaleY(1.12);transform-origin:0 6px;">334</div>
<div class="ct" style="left:548.00px;width:39.90px;top:325px;color:#31333f;text-align:right;transform:scaleY(1.12);transform-origin:0 6px;">121</div>
<div class="ct" style="left:592.50px;width:43.60px;top:325px;color:#31333f;text-align:right;transform:scaleY(1.12);transform-origin:0 6px;">22</div>
<div class="ct" style="left:640.70px;width:65.70px;top:325px;color:#31333f;text-align:right;transform:scaleY(1.12);transform-origin:0 6px;">121</div>
<div class="ct" style="left:711.00px;width:47.80px;top:325px;color:#1c1c26;text-align:right;transform:scaleY(1.12);transform-origin:0 6px;">4</div>
<div class="ct" style="left:763.40px;width:52.70px;top:325px;color:#1c1c26;text-align:right;transform:scaleY(1.12);transform-origin:0 6px;">0</div>
<div class="ct" style="left:820.70px;width:92.20px;top:325px;color:#1c1c26;text-align:right;transform:scaleY(1.12);transform-origin:0 6px;">$90,751.42</div>
<div class="ct lk" style="left:46.80px;width:258.90px;top:343px;color:#1a70d6;transform:scaleY(1.12);transform-origin:0 6px;">Will Jannik Sinner win the 2025 US Open?</div>
<div class="ct " style="left:310.20px;width:35.10px;top:343px;color:#31333f;transform:scaleY(1.12);transform-origin:0 6px;">No</div>
<div class="ct" style="left:345.30px;width:47.70px;top:343px;color:#1c1c26;text-align:right;transform:scaleY(1.12);transform-origin:0 6px;">$0.46</div>
<div class="ct" style="left:397.60px;width:35.00px;top:343px;color:#31333f;text-align:right;transform:scaleY(1.12);transform-origin:0 6px;">$0.01</div>
<div class="ct" style="left:437.20px;width:61.60px;top:343px;color:#1c1c26;text-align:right;transform:scaleY(1.12);transform-origin:0 6px;">$173,782.13</div>
<div class="ct" style="left:503.40px;width:40.00px;top:343px;color:#ffffff;text-align:right;transform:scaleY(1.12);transform-origin:0 6px;">360</div>
<div class="ct" style="left:548.00px;width:39.90px;top:343px;color:#31333f;text-align:right;transform:scaleY(1.12);transform-origin:0 6px;">45</div>
<div class="ct" style="left:592.50px;width:43.60px;top:343px;color:#31333f;text-align:right;transform:scaleY(1.12);transform-origin:0 6px;">14</div>
<div class="ct" style="left:640.70px;width:65.70px;top:343px;color:#31333f;text-align:right;transform:scaleY(1.12);transform-origin:0 6px;">49</div>
<div class="ct" style="left:711.00px;width:47.80px;top:343px;color:#1c1c26;text-align:right;transform:scaleY(1.12);transform-origin:0 6px;">2</div>
<div class="ct" style="left:763.40px;width:52.70px;top:343px;color:#1c1c26;text-align:right;transform:scaleY(1.12);transform-origin:0 6px;">0</div>
<div class="ct" style="left:820.70px;width:92.20px;top:343px;color:#1c1c26;text-align:right;transform:scaleY(1.12);transform-origin:0 6px;">$118,270.39</div>
<div class="ct lk" style="left:46.80px;width:258.90px;top:362px;color:#1a70d6;transform:scaleY(1.12);transform-origin:0 6px;">Will Zohran Mamdani win the 2025 NYC mayoral election?</div>
<div class="ct " style="left:310.20px;width:35.10px;top:362px;color:#31333f;transform:scaleY(1.12);transform-origin:0 6px;">Yes</div>
<div class="ct" style="left:345.30px;width:47.70px;top:362px;color:#ffffff;text-align:right;transform:scaleY(1.12);transform-origin:0 6px;">$0.84</div>
<div class="ct" style="left:397.60px;width:35.00px;top:362px;color:#31333f;text-align:right;transform:scaleY(1.12);transform-origin:0 6px;">-$0.01</div>
<div class="ct" style="left:437.20px;width:61.60px;top:362px;color:#1c1c26;text-align:right;transform:scaleY(1.12);transform-origin:0 6px;">$156,433.69</div>
<div class="ct" style="left:503.40px;width:40.00px;top:362px;color:#ffffff;text-align:right;transform:scaleY(1.12);transform-origin:0 6px;">528</div>
<div class="ct" style="left:548.00px;width:39.90px;top:362px;color:#31333f;text-align:right;transform:scaleY(1.12);transform-origin:0 6px;">165</div>
<div class="ct" style="left:592.50px;width:43.60px;top:362px;color:#31333f;text-align:right;transform:scaleY(1.12);transform-origin:0 6px;">131</div>
<div class="ct" style="left:640.70px;width:65.70px;top:362px;color:#31333f;text-align:right;transform:scaleY(1.12);transform-origin:0 6px;">226</div>
<div class="ct" style="left:711.00px;width:47.80px;top:362px;color:#1c1c26;text-align:right;transform:scaleY(1.12);transform-origin:0 6px;">0</div>
<div class="ct" style="left:763.40px;width:52.70px;top:362px;color:#ffffff;text-align:right;transform:scaleY(1.12);transform-origin:0 6px;">4</div>
<div class="ct" style="left:820.70px;width:92.20px;top:362px;color:#1c1c26;text-align:right;transform:scaleY(1.12);transform-origin:0 6px;">$0.00</div>
<div class="ct lk" style="left:46.80px;width:258.90px;top:380px;color:#1a70d6;transform:scaleY(1.12);transform-origin:0 6px;">Lisa Cook out as Fed Governor by September 30?</div>
<div class="ct " style="left:310.20px;width:35.10px;top:380px;color:#31333f;transform:scaleY(1.12);transform-origin:0 6px;">No</div>
<div class="ct" style="left:345.30px;width:47.70px;top:380px;color:#ffffff;text-align:right;transform:scaleY(1.12);transform-origin:0 6px;">$0.90</div>
<div class="ct" style="left:397.60px;width:35.00px;top:380px;color:#31333f;text-align:right;transform:scaleY(1.12);transform-origin:0 6px;">-$0.01</div>
<div class="ct" style="left:437.20px;width:61.60px;top:380px;color:#1c1c26;text-align:right;transform:scaleY(1.12);transform-origin:0 6px;">$145,675.45</div>
<div class="ct" style="left:503.40px;width:40.00px;top:380px;color:#ffffff;text-align:right;transform:scaleY(1.12);transform-origin:0 6px;">154</div>
<div class="ct" style="left:548.00px;width:39.90px;top:380px;color:#31333f;text-align:right;transform:scaleY(1.12);transform-origin:0 6px;">50</div>
<div class="ct" style="left:592.50px;width:43.60px;top:380px;color:#31333f;text-align:right;transform:scaleY(1.12);transform-origin:0 6px;">23</div>
<div class="ct" style="left:640.70px;width:65.70px;top:380px;color:#31333f;text-align:right;transform:scaleY(1.12);transform-origin:0 6px;">63</div>
<div class="ct" style="left:711.00px;width:47.80px;top:380px;color:#1c1c26;text-align:right;transform:scaleY(1.12);transform-origin:0 6px;">4</div>
<div class="ct" style="left:763.40px;width:52.70px;top:380px;color:#1c1c26;text-align:right;transform:scaleY(1.12);transform-origin:0 6px;">1</div>
<div class="ct" style="left:820.70px;width:92.20px;top:380px;color:#1c1c26;text-align:right;transform:scaleY(1.12);transform-origin:0 6px;">$69,533.69</div>
<div class="ct lk" style="left:46.80px;width:258.90px;top:399px;color:#1a70d6;transform:scaleY(1.12);transform-origin:0 6px;">No change in Fed interest rates after September 2025 meeting?</div>
<div class="ct " style="left:310.20px;width:35.10px;top:399px;color:#31333f;transform:scaleY(1.12);transform-origin:0 6px;">No</div>
<div class="ct" style="left:345.30px;width:47.70px;top:399px;color:#ffffff;text-align:right;transform:scaleY(1.12);transform-origin:0 6px;">$0.88</div>
<div class="ct" style="left:397.60px;width:35.00px;top:399px;color:#a3a3ae;text-align:right;transform:scaleY(1.12);transform-origin:0 6px;">$0.00</div>
<div class="ct" style="left:437.20px;width:61.60px;top:399px;color:#1c1c26;text-align:right;transform:scaleY(1.12);transform-origin:0 6px;">$144,433.74</div>
<div class="ct" style="left:503.40px;width:40.00px;top:399px;color:#ffffff;text-align:right;transform:scaleY(1.12);transform-origin:0 6px;">172</div>
<div class="ct" style="left:548.00px;width:39.90px;top:399px;color:#31333f;text-align:right;transform:scaleY(1.12);transform-origin:0 6px;">64</div>
<div class="ct" style="left:592.50px;width:43.60px;top:399px;color:#31333f;text-align:right;transform:scaleY(1.12);transform-origin:0 6px;">12</div>
<div class="ct" style="left:640.70px;width:65.70px;top:399px;color:#31333f;text-align:right;transform:scaleY(1.12);transform-origin:0 6px;">70</div>
<div class="ct" style="left:711.00px;width:47.80px;top:399px;color:#1c1c26;text-align:right;transform:scaleY(1.12);transform-origin:0 6px;">3</div>
<div class="ct" style="left:763.40px;width:52.70px;top:399px;color:#1c1c26;text-align:right;transform:scaleY(1.12);transform-origin:0 6px;">0</div>
<div class="ct" style="left:820.70px;width:92.20px;top:399px;color:#1c1c26;text-align:right;transform:scaleY(1.12);transform-origin:0 6px;">$57,460.92</div>
<div class="ct lk" style="left:46.80px;width:258.90px;top:417px;color:#1a70d6;transform:scaleY(1.12);transform-origin:0 6px;">Fed decreases interest rates by 25 bps after September 2025 meeting?</div>
<div class="ct " style="left:310.20px;width:35.10px;top:417px;color:#31333f;transform:scaleY(1.12);transform-origin:0 6px;">Yes</div>
<div class="ct" style="left:345.30px;width:47.70px;top:417px;color:#ffffff;text-align:right;transform:scaleY(1.12);transform-origin:0 6px;">$0.83</div>
<div class="ct" style="left:397.60px;width:35.00px;top:417px;color:#a3a3ae;text-align:right;transform:scaleY(1.12);transform-origin:0 6px;">$0.00</div>
<div class="ct" style="left:437.20px;width:61.60px;top:417px;color:#1c1c26;text-align:right;transform:scaleY(1.12);transform-origin:0 6px;">$136,409.37</div>
<div class="ct" style="left:503.40px;width:40.00px;top:417px;color:#ffffff;text-align:right;transform:scaleY(1.12);transform-origin:0 6px;">374</div>
<div class="ct" style="left:548.00px;width:39.90px;top:417px;color:#31333f;text-align:right;transform:scaleY(1.12);transform-origin:0 6px;">159</div>
<div class="ct" style="left:592.50px;width:43.60px;top:417px;color:#31333f;text-align:right;transform:scaleY(1.12);transform-origin:0 6px;">54</div>
<div class="ct" style="left:640.70px;width:65.70px;top:417px;color:#31333f;text-align:right;transform:scaleY(1.12);transform-origin:0 6px;">203</div>
<div class="ct" style="left:711.00px;width:47.80px;top:417px;color:#1c1c26;text-align:right;transform:scaleY(1.12);transform-origin:0 6px;">2</div>
<div class="ct" style="left:763.40px;width:52.70px;top:417px;color:#1c1c26;text-align:right;transform:scaleY(1.12);transform-origin:0 6px;">0</div>
<div class="ct" style="left:820.70px;width:92.20px;top:417px;color:#1c1c26;text-align:right;transform:scaleY(1.12);transform-origin:0 6px;">$48,218.71</div>
<div class="ct lk" style="left:46.80px;width:258.90px;top:436px;color:#1a70d6;transform:scaleY(1.12);transform-origin:0 6px;">Bitcoin above $112K on September 3?</div>
<div class="ct " style="left:310.20px;width:35.10px;top:436px;color:#31333f;transform:scaleY(1.12);transform-origin:0 6px;">No</div>
<div class="ct" style="left:345.30px;width:47.70px;top:436px;color:#1c1c26;text-align:right;transform:scaleY(1.12);transform-origin:0 6px;">$0.69</div>
<div class="ct" style="left:397.60px;width:35.00px;top:436px;color:#31333f;text-align:right;transform:scaleY(1.12);transform-origin:0 6px;">-$0.11</div>
<div class="ct" style="left:437.20px;width:61.60px;top:436px;color:#1c1c26;text-align:right;transform:scaleY(1.12);transform-origin:0 6px;">$135,522.53</div>
<div class="ct" style="left:503.40px;width:40.00px;top:436px;color:#ffffff;text-align:right;transform:scaleY(1.12);transform-origin:0 6px;">478</div>
<div class="ct" style="left:548.00px;width:39.90px;top:436px;color:#31333f;text-align:right;transform:scaleY(1.12);transform-origin:0 6px;">34</div>
<div class="ct" style="left:592.50px;width:43.60px;top:436px;color:#31333f;text-align:right;transform:scaleY(1.12);transform-origin:0 6px;">13</div>
<div class="ct" style="left:640.70px;width:65.70px;top:436px;color:#31333f;text-align:right;transform:scaleY(1.12);transform-origin:0 6px;">36</div>
<div class="ct" style="left:711.00px;width:47.80px;top:436px;color:#1c1c26;text-align:right;transform:scaleY(1.12);transform-origin:0 6px;">0</div>
<div class="ct" style="left:763.40px;width:52.70px;top:436px;color:#1c1c26;text-align:right;transform:scaleY(1.12);transform-origin:0 6px;">0</div>
<div class="ct" style="left:820.70px;width:92.20px;top:436px;color:#1c1c26;text-align:right;transform:scaleY(1.12);transform-origin:0 6px;">$0.00</div>
<div class="ct lk" style="left:46.80px;width:258.90px;top:454px;color:#1a70d6;transform:scaleY(1.12);transform-origin:0 6px;">WLFI &gt;$35B market cap (FDV) one day after launch?</div>
<div class="ct " style="left:310.20px;width:35.10px;top:454px;color:#31333f;transform:scaleY(1.12);transform-origin:0 6px;">No</div>
<div class="ct" style="left:345.30px;width:47.70px;top:454px;color:#ffffff;text-align:right;transform:scaleY(1.12);transform-origin:0 6px;">$1.00</div>
<div class="ct" style="left:397.60px;width:35.00px;top:454px;color:#a3a3ae;text-align:right;transform:scaleY(1.12);transform-origin:0 6px;">$0.00</div>
<div class="ct" style="left:437.20px;width:61.60px;top:454px;color:#1c1c26;text-align:right;transform:scaleY(1.12);transform-origin:0 6px;">$126,647.04</div>
<div class="ct" style="left:503.40px;width:40.00px;top:454px;color:#ffffff;text-align:right;transform:scaleY(1.12);transform-origin:0 6px;">142</div>
<div class="ct" style="left:548.00px;width:39.90px;top:454px;color:#31333f;text-align:right;transform:scaleY(1.12);transform-origin:0 6px;">45</div>
<div class="ct" style="left:592.50px;width:43.60px;top:454px;color:#31333f;text-align:right;transform:scaleY(1.12);transform-origin:0 6px;">13</div>
<div class="ct" style="left:640.70px;width:65.70px;top:454px;color:#31333f;text-align:right;transform:scaleY(1.12);transform-origin:0 6px;">53</div>
<div class="ct" style="left:711.00px;width:47.80px;top:454px;color:#1c1c26;text-align:right;transform:scaleY(1.12);transform-origin:0 6px;">0</div>
<div class="ct" style="left:763.40px;width:52.70px;top:454px;color:#1c1c26;text-align:right;transform:scaleY(1.12);transform-origin:0 6px;">0</div>
<div class="ct" style="left:820.70px;width:92.20px;top:454px;color:#1c1c26;text-align:right;transform:scaleY(1.12);transform-origin:0 6px;">$0.00</div>
<div class="ct lk" style="left:46.80px;width:258.90px;top:472px;color:#1a70d6;transform:scaleY(1.12);transform-origin:0 6px;">Will Ap win the most seats in the next Norwegian parliament?</div>
<div class="ct " style="left:310.20px;width:35.10px;top:472px;color:#31333f;transform:scaleY(1.12);transform-origin:0 6px;">Yes</div>
<div class="ct" style="left:345.30px;width:47.70px;top:472px;color:#ffffff;text-align:right;transform:scaleY(1.12);transform-origin:0 6px;">$0.92</div>
<div class="ct" style="left:397.60px;width:35.00px;top:472px;color:#31333f;text-align:right;transform:scaleY(1.12);transform-origin:0 6px;">-$0.02</div>
<div class="ct" style="left:437.20px;width:61.60px;top:472px;color:#1c1c26;text-align:right;transform:scaleY(1.12);transform-origin:0 6px;">$126,028.92</div>
<div class="ct" style="left:503.40px;width:40.00px;top:472px;color:#ffffff;text-align:right;transform:scaleY(1.12);transform-origin:0 6px;">351</div>
<div class="ct" style="left:548.00px;width:39.90px;top:472px;color:#31333f;text-align:right;transform:scaleY(1.12);transform-origin:0 6px;">84</div>
<div class="ct" style="left:592.50px;width:43.60px;top:472px;color:#31333f;text-align:right;transform:scaleY(1.12);transform-origin:0 6px;">47</div>
<div class="ct" style="left:640.70px;width:65.70px;top:472px;color:#31333f;text-align:right;transform:scaleY(1.12);transform-origin:0 6px;">114</div>
<div class="ct" style="left:711.00px;width:47.80px;top:472px;color:#1c1c26;text-align:right;transform:scaleY(1.12);transform-origin:0 6px;">2</div>
<div class="ct" style="left:763.40px;width:52.70px;top:472px;color:#1c1c26;text-align:right;transform:scaleY(1.12);transform-origin:0 6px;">0</div>
<div class="ct" style="left:820.70px;width:92.20px;top:472px;color:#1c1c26;text-align:right;transform:scaleY(1.12);transform-origin:0 6px;">$64,263.26</div>
<div class="ct lk" style="left:46.80px;width:258.90px;top:491px;color:#1a70d6;transform:scaleY(1.12);transform-origin:0 6px;">Bitcoin above $110K on September 3?</div>
<div class="ct " style="left:310.20px;width:35.10px;top:491px;color:#31333f;transform:scaleY(1.12);transform-origin:0 6px;">Yes</div>
<div class="ct" style="left:345.30px;width:47.70px;top:491px;color:#ffffff;text-align:right;transform:scaleY(1.12);transform-origin:0 6px;">$0.97</div>
<div class="ct" style="left:397.60px;width:35.00px;top:491px;color:#31333f;text-align:right;transform:scaleY(1.12);transform-origin:0 6px;">$0.47</div>
<div class="ct" style="left:437.20px;width:61.60px;top:491px;color:#1c1c26;text-align:right;transform:scaleY(1.12);transform-origin:0 6px;">$118,706.08</div>
<div class="ct" style="left:503.40px;width:40.00px;top:491px;color:#ffffff;text-align:right;transform:scaleY(1.12);transform-origin:0 6px;">494</div>
<div class="ct" style="left:548.00px;width:39.90px;top:491px;color:#31333f;text-align:right;transform:scaleY(1.12);transform-origin:0 6px;">67</div>
<div class="ct" style="left:592.50px;width:43.60px;top:491px;color:#31333f;text-align:right;transform:scaleY(1.12);transform-origin:0 6px;">34</div>
<div class="ct" style="left:640.70px;width:65.70px;top:491px;color:#31333f;text-align:right;transform:scaleY(1.12);transform-origin:0 6px;">83</div>
<div class="ct" style="left:711.00px;width:47.80px;top:491px;color:#1c1c26;text-align:right;transform:scaleY(1.12);transform-origin:0 6px;">1</div>
<div class="ct" style="left:763.40px;width:52.70px;top:491px;color:#1c1c26;text-align:right;transform:scaleY(1.12);transform-origin:0 6px;">0</div>
<div class="ct" style="left:820.70px;width:92.20px;top:491px;color:#1c1c26;text-align:right;transform:scaleY(1.12);transform-origin:0 6px;">$14,384.12</div>
<div class="ct lk" style="left:46.80px;width:258.90px;top:509px;color:#1a70d6;transform:scaleY(1.12);transform-origin:0 6px;">Russia x Ukraine ceasefire before October?</div>
<div class="ct " style="left:310.20px;width:35.10px;top:509px;color:#31333f;transform:scaleY(1.12);transform-origin:0 6px;">No</div>
<div class="ct" style="left:345.30px;width:47.70px;top:509px;color:#ffffff;text-align:right;transform:scaleY(1.12);transform-origin:0 6px;">$0.96</div>
<div class="ct" style="left:397.60px;width:35.00px;top:509px;color:#31333f;text-align:right;transform:scaleY(1.12);transform-origin:0 6px;">$0.00</div>
<div class="ct" style="left:437.20px;width:61.60px;top:509px;color:#1c1c26;text-align:right;transform:scaleY(1.12);transform-origin:0 6px;">$117,126.99</div>
<div class="ct" style="left:503.40px;width:40.00px;top:509px;color:#ffffff;text-align:right;transform:scaleY(1.12);transform-origin:0 6px;">163</div>
<div class="ct" style="left:548.00px;width:39.90px;top:509px;color:#31333f;text-align:right;transform:scaleY(1.12);transform-origin:0 6px;">54</div>
<div class="ct" style="left:592.50px;width:43.60px;top:509px;color:#31333f;text-align:right;transform:scaleY(1.12);transform-origin:0 6px;">26</div>
<div class="ct" style="left:640.70px;width:65.70px;top:509px;color:#31333f;text-align:right;transform:scaleY(1.12);transform-origin:0 6px;">67</div>
<div class="ct" style="left:711.00px;width:47.80px;top:509px;color:#1c1c26;text-align:right;transform:scaleY(1.12);transform-origin:0 6px;">0</div>
<div class="ct" style="left:763.40px;width:52.70px;top:509px;color:#1c1c26;text-align:right;transform:scaleY(1.12);transform-origin:0 6px;">1</div>
<div class="ct" style="left:820.70px;width:92.20px;top:509px;color:#1c1c26;text-align:right;transform:scaleY(1.12);transform-origin:0 6px;">$0.00</div>
<div class="ct lk" style="left:46.80px;width:258.90px;top:528px;color:#1a70d6;transform:scaleY(1.12);transform-origin:0 6px;">Will the Fed cut rates in September?</div>
<div class="ct " style="left:310.20px;width:35.10px;top:528px;color:#31333f;transform:scaleY(1.12);transform-origin:0 6px;">No</div>
<div class="ct" style="left:345.30px;width:47.70px;top:528px;color:#ffffff;text-align:right;transform:scaleY(1.12);transform-origin:0 6px;">$0.95</div>
<div class="ct" style="left:397.60px;width:35.00px;top:528px;color:#31333f;text-align:right;transform:scaleY(1.12);transform-origin:0 6px;">$0.01</div>
<div class="ct" style="left:437.20px;width:61.60px;top:528px;color:#1c1c26;text-align:right;transform:scaleY(1.12);transform-origin:0 6px;">$112,000.00</div>
<div class="ct" style="left:503.40px;width:40.00px;top:528px;color:#ffffff;text-align:right;transform:scaleY(1.12);transform-origin:0 6px;">150</div>
<div class="ct" style="left:548.00px;width:39.90px;top:528px;color:#31333f;text-align:right;transform:scaleY(1.12);transform-origin:0 6px;">50</div>
<div class="ct" style="left:592.50px;width:43.60px;top:528px;color:#31333f;text-align:right;transform:scaleY(1.12);transform-origin:0 6px;">20</div>
<div class="ct" style="left:640.70px;width:65.70px;top:528px;color:#31333f;text-align:right;transform:scaleY(1.12);transform-origin:0 6px;">60</div>
<div class="ct" style="left:711.00px;width:47.80px;top:528px;color:#1c1c26;text-align:right;transform:scaleY(1.12);transform-origin:0 6px;">1</div>
<div class="ct" style="left:763.40px;width:52.70px;top:528px;color:#1c1c26;text-align:right;transform:scaleY(1.12);transform-origin:0 6px;">0</div>
<div class="ct" style="left:820.70px;width:92.20px;top:528px;color:#1c1c26;text-align:right;transform:scaleY(1.12);transform-origin:0 6px;">$15,000.00</div>
<div class="tbo" style="left:42px;top:171px;width:916px;height:400px"></div>
</body></html>
